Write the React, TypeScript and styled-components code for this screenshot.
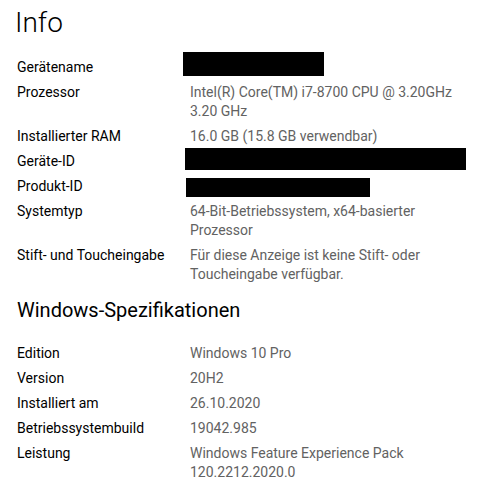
import React from 'react';
import styled, { createGlobalStyle } from 'styled-components';

const GlobalStyle = createGlobalStyle`
  html, body {
    margin: 0;
    padding: 0;
    background: #ffffff;
  }
  body {
    font-family: Roboto, "Noto Sans", sans-serif;
    color: #000000;
    -webkit-font-smoothing: antialiased;
  }
`;

interface IRedactProps {
  left: number;
  top: number;
  width: number;
  height: number;
}

interface ISpec {
  label: string;
  value?: string;
  redact?: IRedactProps;
}

const Page = styled.main`
  width: 479px;
  min-height: 492px;
  box-sizing: border-box;
  padding: 5px 0 0 17px;
`;

const Title = styled.h1`
  margin: 0 0 17px -2px;
  font-size: 28px;
  font-weight: 300;
  line-height: 36px;
`;

const SectionTitle = styled.h2`
  margin: 12px 0 20px 0;
  font-size: 20px;
  font-weight: 400;
  line-height: 28px;
`;

const SpecList = styled.dl`
  display: grid;
  grid-template-columns: 173px 275px;
  row-gap: 6px;
  margin: 0;
  font-size: 14px;
  line-height: 19px;
`;

const Label = styled.dt`
  margin: 0;
  color: #000000;
`;

const Value = styled.dd`
  position: relative;
  margin: 0;
  min-height: 19px;
  color: #626262;
`;

// black boxes that hide personal ids in the screenshot
const Redaction = styled.span<IRedactProps>`
  position: absolute;
  left: ${({ left }) => left}px;
  top: ${({ top }) => top}px;
  width: ${({ width }) => width}px;
  height: ${({ height }) => height}px;
  background: #000000;
`;

const deviceSpecs: ISpec[] = [
  { label: 'Gerätename', redact: { left: -7, top: -6, width: 141, height: 24 } },
  { label: 'Prozessor', value: 'Intel(R) Core(TM) i7-8700 CPU @ 3.20GHz 3.20 GHz' },
  { label: 'Installierter RAM', value: '16.0 GB (15.8 GB verwendbar)' },
  { label: 'Geräte-ID', redact: { left: -5, top: -4, width: 281, height: 22 } },
  { label: 'Produkt-ID', redact: { left: -4, top: 1, width: 184, height: 19 } },
  { label: 'Systemtyp', value: '64-Bit-Betriebssystem, x64-basierter Prozessor' },
  { label: 'Stift- und Toucheingabe', value: 'Für diese Anzeige ist keine Stift- oder Toucheingabe verfügbar.' },
];

const windowsSpecs: ISpec[] = [
  { label: 'Edition', value: 'Windows 10 Pro' },
  { label: 'Version', value: '20H2' },
  { label: 'Installiert am', value: '26.10.2020' },
  { label: 'Betriebssystembuild', value: '19042.985' },
  { label: 'Leistung', value: 'Windows Feature Experience Pack 120.2212.2020.0' },
];

const Specs = ({ items }: { items: ISpec[] }) => (
  <SpecList>
    {items.map(({ label, value, redact }) => (
      <React.Fragment key={label}>
        <Label>{label}</Label>
        <Value>
          {value}
          {redact && <Redaction {...redact} />}
        </Value>
      </React.Fragment>
    ))}
  </SpecList>
);

export default function App() {
  return (
    <>
      <GlobalStyle />
      <Page>
        <Title>Info</Title>
        <Specs items={deviceSpecs} />
        <SectionTitle>Windows-Spezifikationen</SectionTitle>
        <Specs items={windowsSpecs} />
      </Page>
    </>
  );
}
